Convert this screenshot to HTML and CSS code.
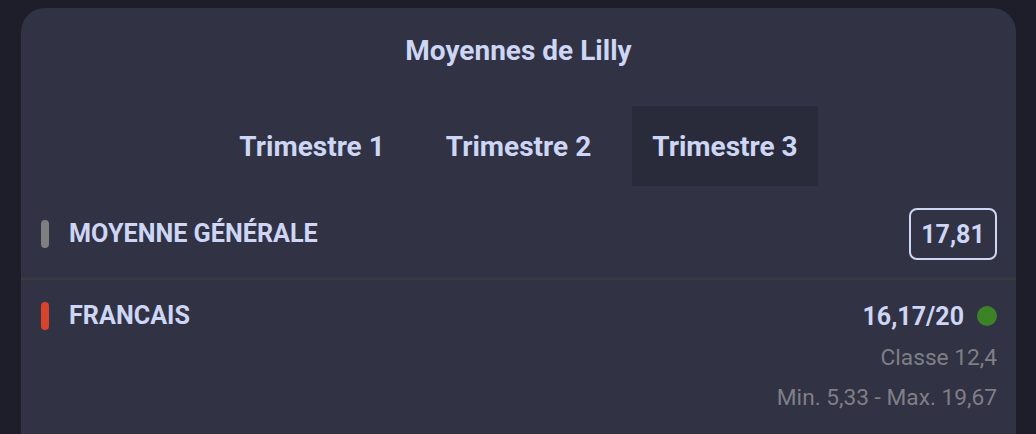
FILE: index.html
```html
<!DOCTYPE html>
<html lang="fr">
<head>
<meta charset="utf-8">
<title>Moyennes de Lilly</title>
<link rel="stylesheet" href="styles.css">
</head>
<body>
<main class="card">
  <h1 class="title">Moyennes de Lilly</h1>
  <nav class="tabs">
    <button class="tab">Trimestre 1</button>
    <button class="tab">Trimestre 2</button>
    <button class="tab tab-active">Trimestre 3</button>
  </nav>
  <section class="row row-general">
    <span class="pill pill-grey"></span>
    <span class="row-label">MOYENNE GÉNÉRALE</span>
    <span class="badge">17,81</span>
  </section>
  <section class="row row-subject">
    <span class="pill pill-red"></span>
    <span class="row-label">FRANCAIS</span>
    <div class="grades">
      <div class="grade-line"><span class="grade">16,17/20</span><span class="dot"></span></div>
      <div class="meta meta-first">Classe 12,4</div>
      <div class="meta">Min. 5,33 - Max. 19,67</div>
    </div>
  </section>
</main>
</body>
</html>
```
FILE: styles.css
```css
html, body {
  margin: 0;
  height: 100%;
}
body {
  background: #1e1e2b;
  font-family: Roboto, "Liberation Sans", sans-serif;
  color: #cdd6f4;
  padding: 8px 20px 0 21px;
  box-sizing: border-box;
  overflow: hidden;
}
.card {
  background: #313244;
  border-radius: 24px 24px 0 0;
  min-height: 500px;
  display: flex;
  flex-direction: column;
}
.title {
  margin: 0;
  padding-top: 27px;
  text-align: center;
  font-size: 28px;
  line-height: 31px;
  font-weight: 700;
  color: #cdd6f4;
}
.tabs {
  display: flex;
  justify-content: center;
  gap: 21px;
  margin-top: 40px;
}
.tab {
  border: 0;
  background: transparent;
  font-family: inherit;
  color: #cdd6f4;
  font-size: 28px;
  font-weight: 700;
  height: 80px;
  padding: 0 20px;
  margin: 0;
}
.tab-active {
  background: #2a2b3a;
}
.row {
  display: flex;
  align-items: flex-start;
  padding: 0 19px 0 20px;
}
.row-general {
  align-items: center;
  padding-top: 22px;
  padding-bottom: 18px;
  border-bottom: 2px solid #3a3b3c;
}
.row-subject {
  padding-top: 22px;
}
.pill {
  width: 8px;
  height: 28px;
  border-radius: 4px;
  margin-right: 20px;
  flex: none;
}
.pill-grey { background: #7f7f7f; }
.pill-red { background: #d9432b; }
.row-label {
  font-size: 25.2px;
  font-weight: 700;
  line-height: 28px;
  flex: 1;
}
.badge {
  border: 2px solid #cdd6f4;
  border-radius: 8px;
  width: 88px;
  height: 52px;
  box-sizing: border-box;
  display: flex;
  align-items: center;
  justify-content: center;
  font-size: 25px;
  font-weight: 700;
}
.grades {
  display: flex;
  flex-direction: column;
  align-items: flex-end;
}
.grade-line {
  display: flex;
  align-items: center;
  gap: 13px;
  height: 28px;
}
.grade {
  font-size: 25px;
  font-weight: 700;
}
.dot {
  width: 20px;
  height: 20px;
  border-radius: 50%;
  background: #3c8226;
}
.meta {
  color: #7f7f85;
  font-size: 22.7px;
  line-height: 40px;
}
.meta-first {
  margin-top: 8px;
}
```
